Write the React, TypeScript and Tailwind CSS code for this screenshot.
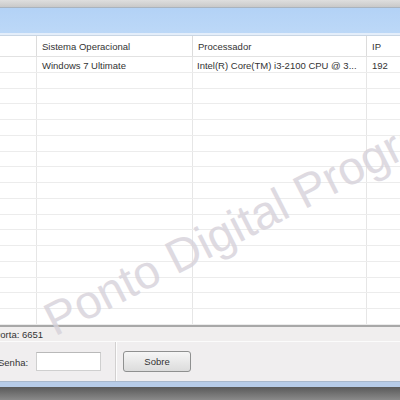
import { FC } from "react";

const rows = Array.from({ length: 17 }, (_, i) => i);

const Row: FC<{ so?: string; cpu?: string; ip?: string }> = ({ so, cpu, ip }) => (
  <div className="flex h-[15.75px] border-b border-[#ececec] items-center text-[#333]">
    <div className="w-[37px] h-full border-r border-[#e6e6e6]" />
    <div className="w-[156px] h-full border-r border-[#e6e6e6] pl-[5px] pt-[3px] flex items-center">{so}</div>
    <div className="w-[174px] h-full border-r border-[#e6e6e6] pl-[4px] pt-[3px] flex items-center whitespace-nowrap overflow-hidden">{cpu}</div>
    <div className="flex-1 h-full pl-[5px] pt-[3px] flex items-center">{ip}</div>
  </div>
);

export default function App() {
  return (
    <div
      className="relative w-[400px] h-[400px] overflow-hidden flex flex-col bg-white text-[9.5px]"
      style={{ fontFamily: '"Liberation Sans", Arial, sans-serif' }}
    >
      {/* title strip */}
      <div className="h-[8px] bg-gradient-to-b from-[#dedede] to-[#c9c9c9] border-b border-[#a9b3be]" />
      <div className="h-[25px] bg-gradient-to-b from-[#b3d2f6] to-[#bcd8f7]" />
      <div className="h-[3px] bg-[#e4eefa] border-b border-[#c9d6e4]" />

      {/* list */}
      <div className="flex flex-col h-[289px] overflow-hidden">
        <div className="flex h-[21px] border-b border-[#e2e2e2] items-center text-[#333]">
          <div className="w-[37px] h-full border-r border-[#dcdcdc]" />
          <div className="w-[156px] h-full border-r border-[#dcdcdc] pl-[5px] pt-[3px] flex items-center">Sistema Operacional</div>
          <div className="w-[174px] h-full border-r border-[#dcdcdc] pl-[5px] pt-[3px] flex items-center">Processador</div>
          <div className="flex-1 h-full pl-[5px] pt-[3px] flex items-center">IP</div>
        </div>
        <Row so="Windows 7 Ultimate" cpu="Intel(R) Core(TM) i3-2100 CPU @ 3..." ip="192" />
        {rows.slice(1).map((r) => (
          <Row key={r} />
        ))}
      </div>

      {/* status */}
      <div className="h-[2px] bg-[#a8a8a8]" />
      <div className="h-[15px] bg-[#f0eeee] flex items-center pt-[3px] text-[#333] border-b border-[#fbfbfb]">
        <span className="ml-[-6px]">Porta: 6651</span>
      </div>

      {/* bottom panel */}
      <div className="h-[39px] bg-[#f0eeef] flex items-center text-[#333]">
        <span className="ml-[-2px] w-[38px] pt-[3px]">Senha:</span>
        <div className="w-[65px] h-[19px] bg-white border border-[#cfcfcf] border-t-[#b9b9b9]" />
        <div className="ml-[14px] h-full w-[2px] border-l border-[#d2d0d0] bg-[#fdfdfd]" />
        <button className="ml-[6px] w-[68px] h-[21px] pt-[1px] rounded-[3px] border border-[#8f9090] bg-gradient-to-b from-[#f6f6f6] to-[#dcdcdc] text-[#333] text-[9.5px]">
          Sobre
        </button>
      </div>

      <div className="h-[6px] bg-[#b7cce8] border-t border-[#a8b8cc]" />
      <div className="flex-1 bg-gradient-to-b from-[#5a5a5a] to-[#8a8a8a]" />

      {/* watermark */}
      <div
        className="absolute pointer-events-none whitespace-nowrap text-[47px] text-[#d6d2da] opacity-80 origin-bottom-left rotate-[-27deg] leading-none left-[58px] top-[296px]"
      >
        Ponto Digital Programação
      </div>
    </div>
  );
}
